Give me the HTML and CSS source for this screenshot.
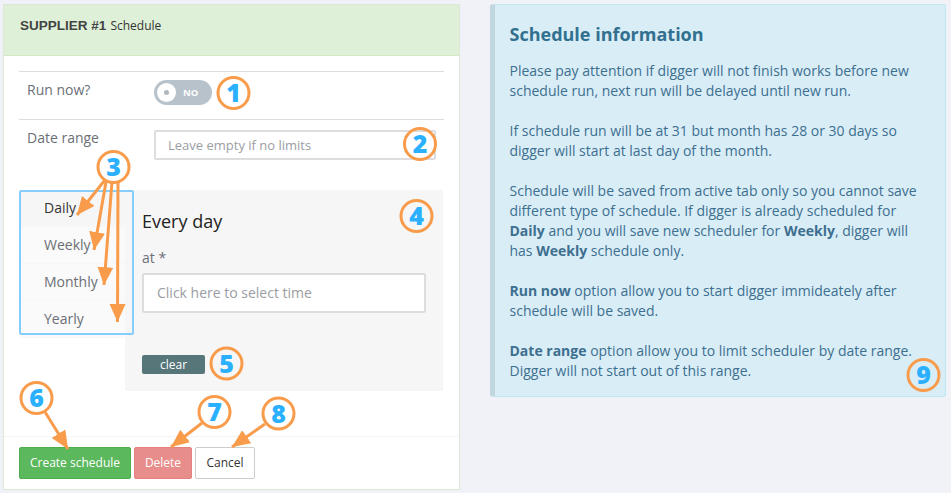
FILE: index.html
```html
<!DOCTYPE html>
<html lang="en">
<head>
<meta charset="utf-8">
<title>Schedule</title>
<link rel="stylesheet" href="styles.css">
</head>
<body>
<main class="page">
  <section class="panel">
    <header class="panel-head"><strong>SUPPLIER #1</strong> <span>Schedule</span></header>
    <div class="panel-body">
      <div class="row row-run">
        <label>Run now?</label>
        <div class="toggle"><i class="knob"><b></b></i><span>NO</span></div>
      </div>
      <div class="row row-date">
        <label>Date range</label>
        <div class="field date">Leave empty if no limits</div>
      </div>
      <div class="tabs-wrap">
        <ul class="tabs">
          <li class="active">Daily</li>
          <li>Weekly</li>
          <li>Monthly</li>
          <li>Yearly</li>
        </ul>
        <div class="pane">
          <h3>Every day</h3>
          <div class="at">at *</div>
          <div class="field time">Click here to select time</div>
          <div class="clear">clear</div>
        </div>
      </div>
    </div>
    <footer class="panel-foot">
      <div class="btn green">Create schedule</div>
      <div class="btn red">Delete</div>
      <div class="btn plain">Cancel</div>
    </footer>
  </section>
  <aside class="info">
    <h2>Schedule information</h2>
    <p>Please pay attention if digger will not finish works before new schedule run, next run will be delayed until new run.</p>
    <p>If schedule run will be at 31 but month has 28 or 30 days so digger will start at last day of the month.</p>
    <p>Schedule will be saved from active tab only so you cannot save different type of schedule. If digger is already scheduled for <b>Daily</b> and you will save new scheduler for <b>Weekly</b>, digger will has <b>Weekly</b> schedule only.</p>
    <p><b>Run now</b> option allow you to start digger immideately after schedule will be saved.</p>
    <p><b>Date range</b> option allow you to limit scheduler by date range. Digger will not start out of this range.</p>
  </aside>
</main>
<svg class="notes" width="951" height="493" viewBox="0 0 951 493">
  <defs>
    <marker id="head" markerUnits="userSpaceOnUse" markerWidth="20" markerHeight="18" refX="18" refY="8" orient="auto">
      <path d="M0 0L18 8L0 16Z" class="arrow-head"/>
    </marker>
  </defs>
  <rect x="20" y="191" width="113" height="143" rx="1" class="tabs-frame"/>
  <g class="arrows">
    <line x1="105" y1="180" x2="77" y2="215" marker-end="url(#head)"/>
    <line x1="106" y1="182" x2="94" y2="250" marker-end="url(#head)"/>
    <line x1="112" y1="182" x2="104" y2="285" marker-end="url(#head)"/>
    <line x1="118" y1="182" x2="117.500" y2="322" marker-end="url(#head)"/>
    <line x1="45" y1="412" x2="68" y2="449" marker-end="url(#head)"/>
    <line x1="202" y1="423" x2="171" y2="447" marker-end="url(#head)"/>
    <line x1="265" y1="424" x2="232" y2="447" marker-end="url(#head)"/>
  </g>
  <g class="badges">
    <circle cx="233.500" cy="93" r="15.500"/><text x="233.500" y="102">1</text>
    <circle cx="420" cy="144" r="15.500"/><text x="420" y="153">2</text>
    <circle cx="113.500" cy="167" r="15.500"/><text x="113.500" y="176">3</text>
    <circle cx="416.500" cy="216" r="15.500"/><text x="416.500" y="225">4</text>
    <circle cx="226.500" cy="363.500" r="15.500"/><text x="226.500" y="372.500">5</text>
    <circle cx="36.500" cy="398" r="15.500"/><text x="36.500" y="407">6</text>
    <circle cx="214.500" cy="412" r="15.500"/><text x="214.500" y="421">7</text>
    <circle cx="278.500" cy="413.500" r="15.500"/><text x="278.500" y="422.500">8</text>
    <circle cx="923.500" cy="375" r="15.500"/><text x="923.500" y="384">9</text>
  </g>
</svg>
</body>
</html>
```
FILE: styles.css
```css
* { box-sizing: border-box; }
html, body { margin: 0; height: 100%; }
body {
  background: #f0f2f8;
  font-family: "Open Sans", sans-serif;
  font-size: 13px;
  color: #6b6f76;
  overflow: hidden;
  position: relative;
}
.page {
  display: flex;
  align-items: flex-start;
  gap: 30px;
  padding: 4px 0 0 3px;
}
.panel {
  width: 457px;
  height: 486px;
  background: #fff;
  border: 1px solid #dce7d6;
  display: flex;
  flex-direction: column;
}
.panel-head {
  height: 51px;
  background: #dff0d8;
  border-bottom: 1px solid #d6e9c6;
  padding: 12px 16px;
  font-size: 12px;
  line-height: 17px;
  color: #333;
}
.panel-head strong {
  font-family: "Liberation Sans", sans-serif;
  font-size: 13.500px;
  color: #444;
  margin-right: 1px;
}
.panel-body {
  flex: 1;
  padding: 15px 15px 0;
}
.row {
  display: grid;
  grid-template-columns: 127px 1fr;
  border-top: 1px solid #ddd;
  padding: 8px 8px 0;
  font-size: 14px;
}
.row label { line-height: 20px; }
.row-run { height: 48px; }
.row-date { height: 71px; padding-top: 10px; }
.row-date label { margin-top: -2px; }
.toggle {
  width: 58px;
  height: 25px;
  border-radius: 13px;
  background: #b7c2ca;
  display: flex;
  align-items: center;
  padding-left: 3px;
  gap: 7px;
  color: #fff;
  font-size: 9.500px;
  font-weight: 700;
}
.knob {
  width: 19px;
  height: 19px;
  border-radius: 50%;
  background: #fff;
  display: flex;
  align-items: center;
  justify-content: center;
}
.knob b {
  width: 5px;
  height: 5px;
  border-radius: 50%;
  background: #b0b8be;
}
.field {
  border: 2px solid #ddd;
  border-radius: 2px;
  background: #fff;
  color: #9a9da3;
  font-size: 13px;
}
.date {
  height: 30px;
  line-height: 26px;
  padding-left: 12px;
}
.tabs-wrap {
  display: flex;
  height: 201px;
  padding-right: 1px;
}
.tabs {
  list-style: none;
  margin: 0;
  padding: 0 0 0 1px;
  width: 106px;
  height: 144px;
  flex: none;
}
.tabs li {
  height: 37px;
  padding: 8px 0 0 24px;
  font-size: 14px;
  line-height: 20px;
  background: #fafafa;
  border-bottom: 1px solid #f6f6f6;
}
.tabs li.active {
  background: #f6f6f6;
  color: #333;
}
.pane {
  flex: 1;
  background: #f6f6f6;
  padding: 19px 17px 0;
}
.pane h3 {
  margin: 0;
  font-size: 18px;
  font-weight: 400;
  line-height: 25px;
  color: #222;
}
.at {
  margin-top: 14px;
  font-size: 14px;
  line-height: 20px;
}
.time {
  margin-top: 5px;
  height: 40px;
  line-height: 36px;
  padding-left: 13px;
  font-size: 14px;
}
.clear {
  margin-top: 42px;
  width: 63px;
  height: 19px;
  border-radius: 2px;
  background: #56767a;
  color: #fff;
  font-size: 12px;
  line-height: 19px;
  text-align: center;
}
.panel-foot {
  border-top: 1px solid #f4f4f4;
  height: 53px;
  padding: 10px 15px 0;
  display: flex;
  gap: 3px;
}
.btn {
  height: 32px;
  border-radius: 2px;
  font-size: 12px;
  line-height: 30px;
  text-align: center;
  border: 1px solid transparent;
}
.green { width: 112px; background: #5cb85c; border-color: #4cae4c; color: #fff; }
.red { width: 58px; background: #e78d8b; border-color: #e5807e; color: #fff; }
.plain { width: 60px; background: #fff; border-color: #ccc; color: #333; }
.info {
  width: 456px;
  height: 393px;
  background: #d9edf7;
  border: 1px solid #bce8f1;
  border-left: 5px solid #c2d6e0;
  border-radius: 3px;
  padding: 16px 14px 0 14.500px;
  color: #3d6f8f;
  font-size: 14px;
  line-height: 20px;
}
.info h2 {
  margin: 0 0 14px;
  font-size: 18px;
  line-height: 26px;
  font-weight: 700;
  color: #31708f;
}
.info p { margin: 0 0 20px; }
.info b { font-weight: 700; }
.notes {
  position: absolute;
  left: 0;
  top: 0;
  pointer-events: none;
}
.tabs-frame { fill: none; stroke: #86cdfb; stroke-width: 2; }
.arrows line { stroke: #f89c4c; stroke-width: 3; }
.arrow-head { fill: #f89c4c; }
.badges circle { fill: none; stroke: #f89c4c; stroke-width: 3; }
.badges text {
  font-family: "Open Sans", sans-serif;
  font-size: 25px;
  font-weight: 800;
  fill: #2bb0ff;
  text-anchor: middle;
}
```
